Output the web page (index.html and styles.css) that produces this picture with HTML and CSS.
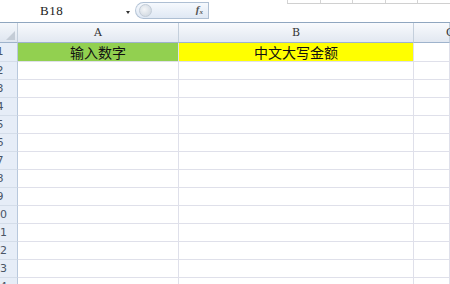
FILE: index.html
```html
<!DOCTYPE html>
<html>
<head>
<meta charset="utf-8">
<link rel="stylesheet" href="styles.css">
</head>
<body>
<div class="app">
  <div class="toolbar">
    <div class="namebox">B18</div>
    <div class="arrow"></div>
    <div class="fxbar">
      <div class="knob"></div>
      <div class="fx">f<sub>x</sub></div>
    </div>
    <div class="ribbon">
      <span></span><span></span><span></span><span></span><span></span>
    </div>
  </div>
  <div class="sheet">
    <div class="corner"><div class="tri"></div></div>
    <div class="colhead">A</div>
    <div class="colhead">B</div>
    <div class="colhead last">C</div>

    <div class="rowhead"><span>1</span></div>
    <div class="cell green">输入数字</div>
    <div class="cell yellow">中文大写金额</div>
    <div class="cell"></div>

    <div class="rowhead"><span>2</span></div><div class="cell"></div><div class="cell"></div><div class="cell"></div>
    <div class="rowhead"><span>3</span></div><div class="cell"></div><div class="cell"></div><div class="cell"></div>
    <div class="rowhead"><span>4</span></div><div class="cell"></div><div class="cell"></div><div class="cell"></div>
    <div class="rowhead"><span>5</span></div><div class="cell"></div><div class="cell"></div><div class="cell"></div>
    <div class="rowhead"><span>6</span></div><div class="cell"></div><div class="cell"></div><div class="cell"></div>
    <div class="rowhead"><span>7</span></div><div class="cell"></div><div class="cell"></div><div class="cell"></div>
    <div class="rowhead"><span>8</span></div><div class="cell"></div><div class="cell"></div><div class="cell"></div>
    <div class="rowhead"><span>9</span></div><div class="cell"></div><div class="cell"></div><div class="cell"></div>
    <div class="rowhead"><span>10</span></div><div class="cell"></div><div class="cell"></div><div class="cell"></div>
    <div class="rowhead"><span>11</span></div><div class="cell"></div><div class="cell"></div><div class="cell"></div>
    <div class="rowhead"><span>12</span></div><div class="cell"></div><div class="cell"></div><div class="cell"></div>
    <div class="rowhead"><span>13</span></div><div class="cell"></div><div class="cell"></div><div class="cell"></div>
    <div class="rowhead"><span>14</span></div><div class="cell"></div><div class="cell"></div><div class="cell"></div>
  </div>
</div>
</body>
</html>
```
FILE: styles.css
```css
html, body {
  margin: 0;
  padding: 0;
  background: #ffffff;
}
.app {
  width: 450px;
  height: 284px;
  overflow: hidden;
  font-family: "Liberation Sans", "Noto Sans CJK SC", sans-serif;
}
.toolbar {
  height: 22px;
  display: flex;
  align-items: flex-start;
  background: #ffffff;
}
.namebox {
  width: 86px;
  padding-left: 40px;
  padding-top: 4px;
  font-family: "Liberation Serif", serif;
  font-size: 13px;
  line-height: 14px;
  color: #222;
  letter-spacing: 0.5px;
}
.arrow {
  width: 0;
  height: 0;
  margin-top: 11px;
  border-left: 2.5px solid transparent;
  border-right: 2.5px solid transparent;
  border-top: 3px solid #333;
}
.fxbar {
  margin-top: 2px;
  margin-left: 5px;
  width: 74px;
  height: 17px;
  display: flex;
  align-items: center;
  justify-content: space-between;
  border: 1px solid #aebfd3;
  border-left-color: #b8c7d8;
  border-radius: 9px 0 0 9px;
  background: linear-gradient(#f6f9fd, #dfe8f4);
  box-sizing: border-box;
}
.knob {
  width: 11px;
  height: 11px;
  margin-left: 3px;
  border-radius: 50%;
  background: radial-gradient(circle at 40% 40%, #f4f6f8, #c9d2dc);
  border: 1px solid #c2ccd7;
}
.fx {
  font-family: "Liberation Serif", serif;
  font-style: italic;
  font-weight: bold;
  font-size: 11px;
  color: #555;
  margin-right: 5px;
  line-height: 12px;
}
.fx sub {
  font-size: 7px;
  vertical-align: -1px;
}
.ribbon {
  margin-left: auto;
  width: 163px;
  height: 3px;
  display: flex;
  border-bottom: 1px solid #d0d0d0;
}
.ribbon span {
  width: 32px;
  border-left: 1px solid #d4d4d4;
}
.sheet {
  display: grid;
  grid-template-columns: 18px 161px 235px 36px;
  grid-template-rows: 20px 19px repeat(13, 18px);
  border-top: 1px solid #8fa6bf;
}
.corner {
  position: relative;
  background: linear-gradient(#f4f7fb, #dfe6f0);
  border-right: 1px solid #c4cfdc;
  border-bottom: 1px solid #9eb3cc;
  box-sizing: border-box;
}
.tri {
  position: absolute;
  right: 2px;
  bottom: 2px;
  width: 0;
  height: 0;
  border-left: 9px solid transparent;
  border-bottom: 9px solid #c4ccd6;
}
.colhead {
  background: linear-gradient(#f8fafd, #e2e8f1);
  border-right: 1px solid #c4cfdc;
  border-bottom: 1px solid #9eb3cc;
  box-sizing: border-box;
  font-family: "DejaVu Serif", serif;
  font-size: 11px;
  color: #333;
  text-align: center;
  line-height: 20px;
}
.colhead.last {
  text-align: left;
  padding-left: 32px;
}
.rowhead {
  background: #e6edf7;
  border-right: 1px solid #b8c8dc;
  border-bottom: 1px solid #d4dde9;
  box-sizing: border-box;
  overflow: hidden;
}
.rowhead span {
  display: block;
  width: 30px;
  margin-left: -15px;
  text-align: center;
  font-family: "DejaVu Sans", sans-serif;
  font-size: 11px;
  line-height: 18px;
  color: #4a5566;
}
.cell {
  border-right: 1px solid #dfe0ea;
  border-bottom: 1px solid #dfe0ea;
  box-sizing: border-box;
  font-family: "Noto Sans CJK SC", sans-serif;
  font-size: 14px;
  line-height: 18px;
  text-align: center;
  color: #111;
}
.green {
  background: #92d050;
}
.yellow {
  background: #ffff00;
}
```
